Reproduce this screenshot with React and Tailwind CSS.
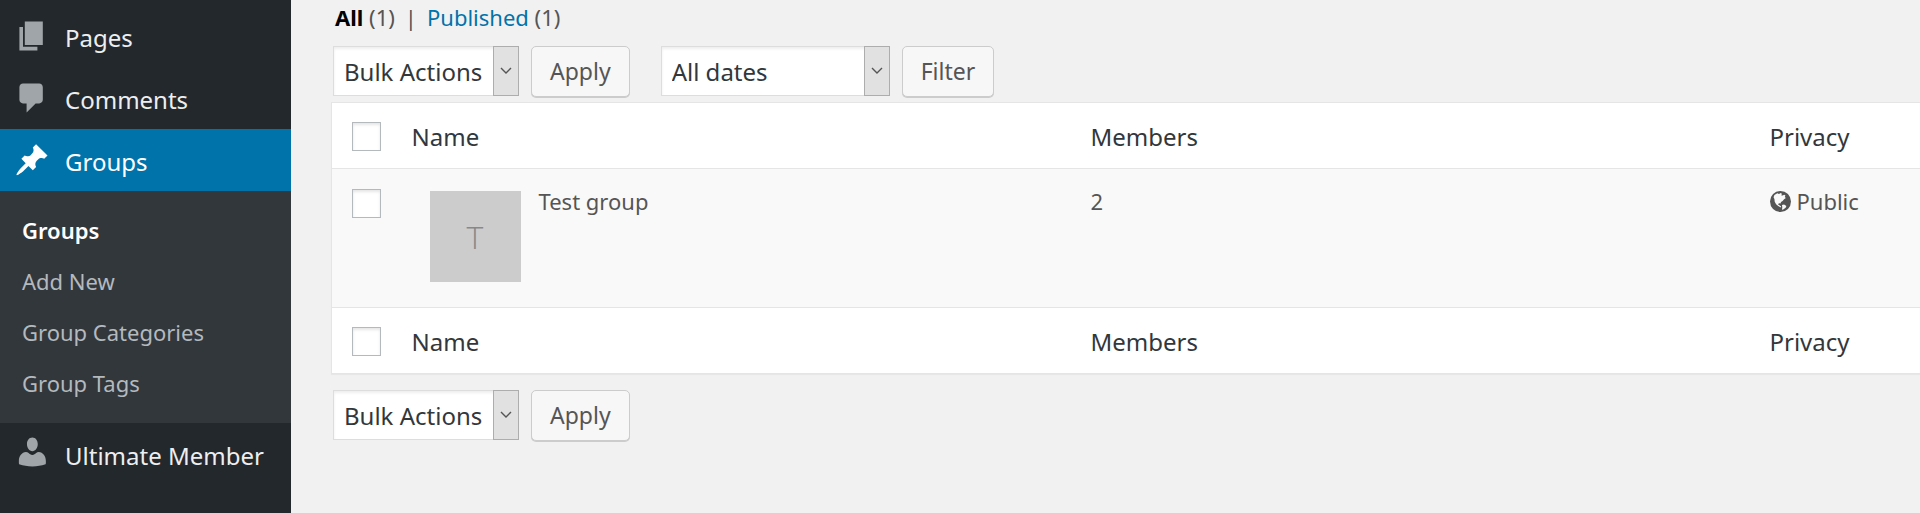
import React from 'react'

const ICONS = {
  pages: 'M6 15V2h10v13H6zm-1 1h8v2H3V5h2v11z',
  comments: 'M5 2h9c1.1 0 2 .9 2 2v7c0 1.1-.9 2-2 2h-2l-5 5v-5H5c-1.1 0-2-.9-2-2V4c0-1.1.9-2 2-2z',
  pin: 'M10.44 3.02l1.82-1.82 6.36 6.35-1.83 1.82c-1.05-.68-2.48-.57-3.41.36l-.75.75c-.92.93-1.04 2.35-.35 3.41l-1.83 1.82-2.41-2.41-2.8 2.79c-.42.42-3.38 2.71-3.8 2.29s1.86-3.39 2.28-3.81l2.79-2.79L4.1 9.36l1.83-1.82c1.05.69 2.48.57 3.4-.36l.75-.75c.93-.92 1.05-2.35.36-3.41z',
  member: 'M10.2.8c1.800 0 3 1.600 3 3.700s-1.300 4-3 4-3-1.900-3-4S8.400.8 10.200.8zM6.600 8.900c.6 0 1.100.2 1.500.6.6.6 1.200 1 2.100 1s1.500-.4 2.100-1c.4-.4.9-.6 1.500-.6 2.200.2 3.900 2.300 3.900 5v1.200c0 .4-.2.7-.6.8-1.700.7-4.200 1-6.900 1s-5.200-.3-6.900-1c-.4-.1-.6-.4-.6-.8v-1.200c0-2.700 1.700-4.800 3.900-5z',
}

const submenu = ['Groups', 'Add New', 'Group Categories', 'Group Tags']

function MenuItem({ icon, label, active }) {
  return (
    <li>
      <a
        href="#"
        className={`flex h-[62px] items-center pl-3.5 text-2xl ${active ? 'bg-[#0073aa] text-white' : 'text-[#eeeeee]'}`}
      >
        <svg viewBox="0 0 20 20" className={`mr-[15px] size-9 ${active ? 'fill-white' : 'fill-[#a0a5aa]'}`}>
          <path d={ICONS[icon]} />
        </svg>
        <span className="pt-[3px]">{label}</span>
      </a>
    </li>
  )
}

function Select({ id, label, value, className }) {
  return (
    <div className={`relative h-[50px] ${className}`}>
      <label htmlFor={id} className="sr-only">{label}</label>
      <select
        id={id}
        className="h-full w-full appearance-none border border-[#dddddd] bg-white pl-2.5 pr-7 pt-0.5 text-2xl text-[#32373c] shadow-[inset_0_2px_3px_rgba(0,0,0,0.07)]"
      >
        <option>{value}</option>
      </select>
      <span className="pointer-events-none absolute inset-y-0 right-0 flex w-[26px] items-center justify-center border border-[#adadad] bg-[#e1e1e1]">
        <svg viewBox="0 0 12 8" className="h-2 w-3 fill-none stroke-[#555555]">
          <path d="M1 1l5 5 5-5" strokeWidth="1.4" />
        </svg>
      </span>
    </div>
  )
}

function Button({ children }) {
  return (
    <button
      type="button"
      className="h-[51px] rounded-[5px] border border-[#cccccc] bg-[#f7f7f7] px-[18px] text-[23px] text-[#555555] shadow-[0_1px_0_#cccccc]"
    >
      {children}
    </button>
  )
}

function Checkbox({ label }) {
  return (
    <input
      type="checkbox"
      aria-label={label}
      className="block size-[29px] appearance-none border border-[#b4b9be] bg-white shadow-[inset_0_2px_3px_rgba(0,0,0,0.1)]"
    />
  )
}

function HeadingRow({ label }) {
  return (
    <tr className="h-[66px] bg-white text-left text-2xl text-[#32373c]">
      <th className="pl-5 pt-0.5"><Checkbox label={label} /></th>
      <th className="pl-3.5 pt-0.5 font-normal">Name</th>
      <th className="pl-3.5 pt-0.5 font-normal">Members</th>
      <th className="pl-3.5 pt-0.5 font-normal">Privacy</th>
    </tr>
  )
}

function Globe() {
  return (
    <svg viewBox="0 0 20 20" className="size-[21px]">
      <circle cx="10" cy="10" r="10" className="fill-[#555555]" />
      <path
        className="fill-[#f9f9f9]"
        d="M4.200 3.800L7 2.200l1.500.6 1.800-.8 1.200.8-1 1.200 1.600.4 1.400-.9 1.200.8-.6 1.500 1 .9-1.700 1.100-1.400 1.700-1.500.9-.5 1.500-1.400-.3-1 .9 1.300 1.100 1.600.9-.3 1.200-2.400-1.400-2-1.600-1.300-2.400L4.200 7.500l-.8-1.600z M11.400 13.300l2-.4 2.200 1.300-.7 1.700-2.300 1.700-1.200.2.300-2.300z"
      />
    </svg>
  )
}

export default function App() {
  return (
    <div className="flex min-h-screen bg-[#f1f1f1] font-['Noto_Sans','Open_Sans',sans-serif] text-[22px] leading-[31px] text-[#555555]">
      <nav className="w-[291px] shrink-0 bg-[#23282d] pt-[5px]">
        <ul>
          <MenuItem icon="pages" label="Pages" />
          <MenuItem icon="comments" label="Comments" />
          <MenuItem icon="pin" label="Groups" active />
          <li>
            <ul className="bg-[#32373c] py-3.5">
              {submenu.map((item, i) => (
                <li key={item}>
                  <a
                    href="#"
                    className={`flex h-[51px] items-center pl-[22px] ${i === 0 ? 'font-semibold text-white' : 'text-[#b4b9be]'}`}
                  >
                    {item}
                  </a>
                </li>
              ))}
            </ul>
          </li>
          <MenuItem icon="member" label="Ultimate Member" />
        </ul>
      </nav>

      <main className="min-w-0 flex-1 overflow-hidden pl-10">
        <div className="flex gap-2.5 pl-1 pt-0.5">
          <span><a href="#" className="font-bold text-black">All</a> (1)</span>
          <span>|</span>
          <span><a href="#" className="text-[#0073aa]">Published</a> (1)</span>
        </div>

        <div className="flex pl-0.5 pt-[13px]">
          <Select id="bulk-top" label="Select bulk action" value="Bulk Actions" className="mr-3 w-[186px]" />
          <Button>Apply</Button>
          <Select id="dates" label="Filter by date" value="All dates" className="ml-[31px] mr-3 w-[229px]" />
          <Button>Filter</Button>
        </div>

        <table className="mt-[5px] w-full table-fixed border-y border-l border-[#e5e5e5] shadow-[0_1px_1px_rgba(0,0,0,0.04)]">
          <colgroup>
            <col className="w-[66px]" />
            <col className="w-[679px]" />
            <col className="w-[679px]" />
            <col />
          </colgroup>
          <thead className="border-b border-[#e5e5e5]">
            <HeadingRow label="Select all" />
          </thead>
          <tbody>
            <tr className="h-[139px] bg-[#f9f9f9] align-top">
              <td className="pl-5 pt-5"><Checkbox label="Select Test group" /></td>
              <td className="pl-8 pt-[17px]">
                <div className="flex gap-[18px]">
                  <span className="mt-[5px] flex size-[91px] items-center justify-center bg-[#cccccc] font-['Open_Sans'] text-[32px] font-light text-[#888888]">
                    T
                  </span>
                  Test group
                </div>
              </td>
              <td className="pl-3.5 pt-[17px]">2</td>
              <td className="pl-3.5 pt-[17px]">
                <span className="flex items-center gap-1.5"><Globe />Public</span>
              </td>
            </tr>
          </tbody>
          <tfoot className="border-t border-[#e5e5e5]">
            <HeadingRow label="Select all rows" />
          </tfoot>
        </table>

        <div className="flex pl-0.5 pt-4">
          <Select id="bulk-bottom" label="Select bulk action" value="Bulk Actions" className="mr-3 w-[186px]" />
          <Button>Apply</Button>
        </div>
      </main>
    </div>
  )
}
